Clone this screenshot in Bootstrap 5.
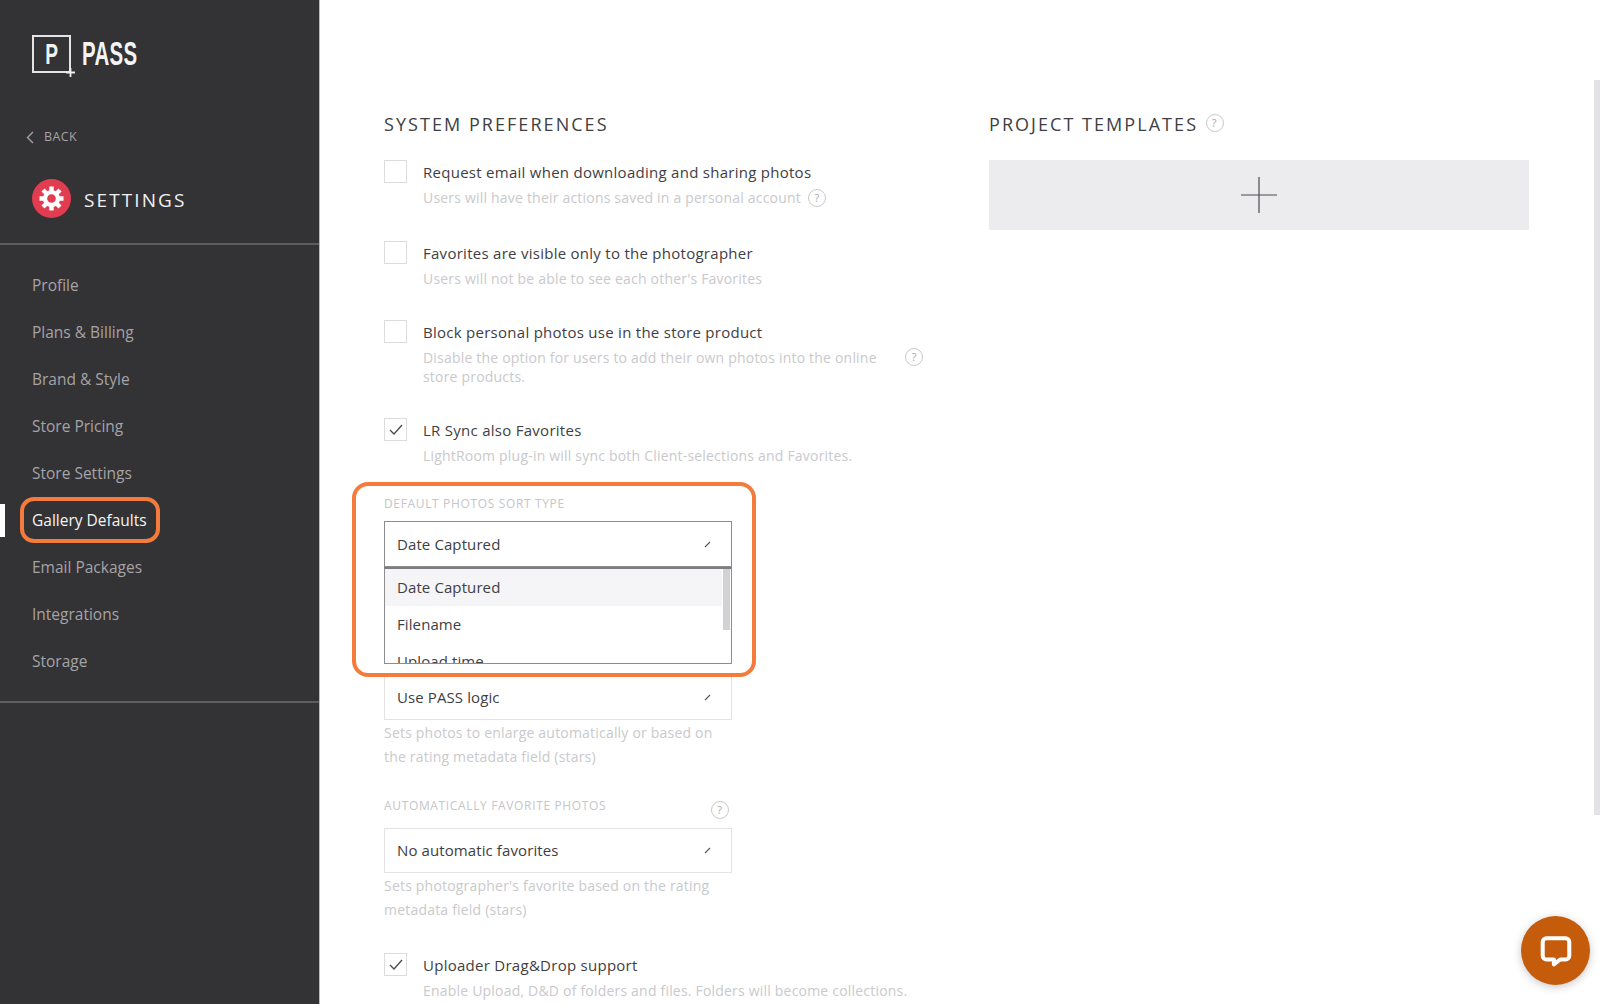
<!DOCTYPE html>
<html lang="en">
<head>
    <meta charset="UTF-8">
    <meta name="viewport" content="width=device-width, initial-scale=1.0">
    <title>PASS Settings</title>
    <link href="https://cdn.jsdelivr.net/npm/bootstrap@5.3.0/dist/css/bootstrap.min.css" rel="stylesheet">
    <style>
        html, body { height: 100%; overflow: hidden; }
        body { font-family: "Open Sans", "Liberation Sans", sans-serif; background: #fff; color: #404043; }

        /* sidebar */
        .side-panel { width: 320px; height: 1004px; background: #333235; border-right: 1px solid #b9b9bb; flex-shrink: 0; }
        .logo-row { padding: 35px 0 0 32px; height: 122px; }
        .logo-box { width: 39px; height: 38px; border: 2px solid #e4e4e4; position: relative; color: #f2f2f2; font: 700 29px/34px "Liberation Sans", sans-serif; display: flex; justify-content: center; }
        .logo-p { transform: scaleX(.66); display: block; }
        .logo-plus { position: absolute; right: -7px; bottom: -7px; width: 11px; height: 11px; }
        .logo-word { color: #f4f4f4; font: 700 33px/38px "Liberation Sans", sans-serif; margin-left: 11px; letter-spacing: .5px; transform: scaleX(.62); transform-origin: left center; }
        .back-row { padding-left: 26px; height: 30px; color: #a3a2a5; font-size: 12.5px; letter-spacing: .4px; }
        .back-row svg { margin-right: 10px; }
        .title-row { padding: 0 0 0 32px; height: 39px; margin-top: 27px; color: #f1f1f1; font-size: 19px; letter-spacing: 2.1px; }
        .title-row svg { margin-right: 13px; flex-shrink: 0; }
        .title-word { margin-top: 4px; }
        .side-rule { height: 2px; background: #5d5c5f; }
        .side-rule-top { margin-top: 25px; }
        .side-menu { padding: 17px 0 16px; }
        .side-menu .nav-link { height: 47px; padding: 0 0 0 32px; display: flex; align-items: center; color: #a5a4a7; font-size: 15.5px; position: relative; }
        .side-menu .nav-link.active { color: #f5f5f5; }
        .active-bar { position: absolute; left: 0; top: 7px; width: 5px; height: 33px; background: #fff; }
        .mark-menu { position: absolute; left: 20px; top: 0; width: 140px; height: 46px; border: 4px solid #f47b3b; border-radius: 14px; }

        /* main */
        .main-panel { padding: 112px 0 0 64px; }
        .col-prefs { width: 605px; flex-shrink: 0; }
        .col-templates { width: 540px; }
        .sect-title { font-size: 18px; line-height: 24px; letter-spacing: 2.05px; color: #404043; margin: 0; font-weight: 400; }
        .opt-list { margin-top: 24px; }
        .opt-row { display: flex; margin-bottom: 32px; position: relative; }
        .opt-row-wide { margin-bottom: 34px; }
        .opt-box { width: 23px; height: 23px; border: 1px solid #dcdbde; margin-right: 16px; flex-shrink: 0; display: flex; align-items: center; justify-content: center; }
        .opt-label { font-size: 15px; line-height: 24px; color: #3f3e42; letter-spacing: .27px; }
        .opt-desc { font-size: 14px; line-height: 19px; margin-top: 4px; color: #cac9cc; letter-spacing: .2px; }
        .field-head { font-size: 12px; line-height: 18px; color: #c6c5c8; letter-spacing: .65px; display: flex; justify-content: space-between; width: 348px; }
        .field-select { width: 348px; height: 45px; border: 1px solid #e3e2e5; display: flex; align-items: center; justify-content: space-between; padding: 0 20px 0 12px; font-size: 15px; color: #3f3e42; margin-top: 12px; background: #fff; letter-spacing: .1px; }
        .field-note { width: 348px; font-size: 14px; line-height: 23.5px; color: #cac9cc; margin-top: 1px; letter-spacing: .2px; }
        .sort-field { position: relative; margin-top: 30px; }
        .sort-field .field-select { height: 46px; margin-top: 8px; border-color: #8d8c8f; }
        .sort-list { position: absolute; left: 0; top: 72px; width: 348px; height: 97px; overflow: hidden; background: #fff; border: 1px solid #8d8c8f; border-top: 2px solid #7d7c80; z-index: 2; font-size: 15px; color: #3f3e42; letter-spacing: .1px; }
        .sort-item { height: 37px; padding: 0 12px; display: flex; align-items: center; }
        .sort-item.current { background: #f5f4f6; margin-right: 9px; }
        .sort-thumb { position: absolute; right: 1px; top: 0; width: 7px; height: 61px; background: #d2d1d4; }
        .mark-sort { position: absolute; left: -32px; top: -13px; width: 404px; height: 195px; border: 4px solid #f47b3b; border-radius: 16px; z-index: 3; }
        .enlarge-field { margin-top: 74px; }
        .auto-field { margin-top: 29px; }
        .auto-field .field-select { margin-top: 9px; }
        .hint-dot { width: 18px; height: 18px; border: 1.5px solid #c9c8cb; border-radius: 50%; color: #a9a8ab; font-size: 11px; line-height: 15px; text-align: center; display: inline-block; flex-shrink: 0; }
        .hint-low { margin-top: 4px; margin-right: 3px; }
        .hint-row { margin-left: 7px; vertical-align: 1px; }
        .hint-head { margin-left: 8px; margin-top: -3px; }
        .hint-side { position: absolute; left: 521px; top: 28px; }
        .tmpl-add { height: 70px; background: #ecebee; margin-top: 24px; display: flex; align-items: center; justify-content: center; }
        .scroll-thumb { position: absolute; right: 0; top: 80px; width: 6px; height: 735px; background: #e3e3e6; }
        .chat-btn { position: absolute; left: 1521px; top: 916px; width: 69px; height: 69px; border-radius: 50%; background: #c45c0b; box-shadow: 0 2px 8px rgba(0,0,0,.22); display: flex; align-items: center; justify-content: center; }
    </style>
</head>
<body>
<div class="d-flex position-relative">

    <!-- Sidebar -->
    <aside class="side-panel">
        <div class="logo-row d-flex align-items-start">
            <div class="logo-box"><span class="logo-p">P</span>
                <svg class="logo-plus" viewBox="0 0 11 11"><path d="M5.5 1v9M1 5.5h9" stroke="#eee" stroke-width="1.8"/></svg>
            </div>
            <div class="logo-word">PASS</div>
        </div>
        <div class="back-row d-flex align-items-center">
            <svg width="8" height="13" viewBox="0 0 8 13"><path d="M7 1 1.5 6.5 7 12" fill="none" stroke="#a3a2a5" stroke-width="1.4"/></svg>
            BACK
        </div>
        <div class="title-row d-flex align-items-center">
            <svg width="39" height="39" viewBox="0 0 39 39">
                <circle cx="19.5" cy="19.5" r="19.5" fill="#e23c50"/>
                <g stroke="#fff" stroke-width="4.4">
                    <path d="M19.5 7.5v24M7.5 19.5h24M11 11l17 17M28 11 11 28"/>
                </g>
                <circle cx="19.5" cy="19.5" r="8.6" fill="#fff"/>
                <circle cx="19.5" cy="19.5" r="4.3" fill="#e23c50"/>
            </svg>
            <span class="title-word">SETTINGS</span>
        </div>
        <div class="side-rule side-rule-top"></div>
        <nav class="nav flex-column side-menu">
            <a class="nav-link" href="#">Profile</a>
            <a class="nav-link" href="#">Plans &amp; Billing</a>
            <a class="nav-link" href="#">Brand &amp; Style</a>
            <a class="nav-link" href="#">Store Pricing</a>
            <a class="nav-link" href="#">Store Settings</a>
            <a class="nav-link active" href="#"><span class="active-bar"></span>Gallery Defaults<span class="mark-menu"></span></a>
            <a class="nav-link" href="#">Email Packages</a>
            <a class="nav-link" href="#">Integrations</a>
            <a class="nav-link" href="#">Storage</a>
        </nav>
        <div class="side-rule"></div>
    </aside>

    <!-- Main -->
    <main class="main-panel d-flex flex-grow-1">
        <section class="col-prefs">
            <h2 class="sect-title">SYSTEM PREFERENCES</h2>
            <div class="opt-list">
                <div class="opt-row opt-row-wide">
                    <span class="opt-box"></span>
                    <div>
                        <div class="opt-label">Request email when downloading and sharing photos</div>
                        <div class="opt-desc">Users will have their actions saved in a personal account<span class="hint-dot hint-row">?</span></div>
                    </div>
                </div>
                <div class="opt-row">
                    <span class="opt-box"></span>
                    <div>
                        <div class="opt-label">Favorites are visible only to the photographer</div>
                        <div class="opt-desc">Users will not be able to see each other's Favorites</div>
                    </div>
                </div>
                <div class="opt-row">
                    <span class="opt-box"></span>
                    <div>
                        <div class="opt-label">Block personal photos use in the store product</div>
                        <div class="opt-desc">Disable the option for users to add their own photos into the online<br>store products.</div>
                    </div>
                    <span class="hint-dot hint-side">?</span>
                </div>
                <div class="opt-row mb-0">
                    <span class="opt-box">
                        <svg width="14" height="12" viewBox="0 0 14 12"><path d="m1 6 4 4 8-9" fill="none" stroke="#4a494d" stroke-width="1.3"/></svg>
                    </span>
                    <div>
                        <div class="opt-label">LR Sync also Favorites</div>
                        <div class="opt-desc">LightRoom plug-in will sync both Client-selections and Favorites.</div>
                    </div>
                </div>
            </div>

            <div class="sort-field">
                <div class="field-head">DEFAULT PHOTOS SORT TYPE</div>
                <div class="field-select">Date Captured
                    <svg width="7" height="7" viewBox="0 0 7 7"><path d="m1 6 5-5" stroke="#555" stroke-width="1.1"/></svg>
                </div>
                <div class="sort-list">
                    <div class="sort-item current">Date Captured</div>
                    <div class="sort-item">Filename</div>
                    <div class="sort-item">Upload time</div>
                    <span class="sort-thumb"></span>
                </div>
                <span class="mark-sort"></span>
            </div>

            <div class="enlarge-field">
                <div class="field-head"><span></span><span class="hint-dot hint-low">?</span></div>
                <div class="field-select">Use PASS logic
                    <svg width="7" height="7" viewBox="0 0 7 7"><path d="m1 6 5-5" stroke="#555" stroke-width="1.1"/></svg>
                </div>
                <div class="field-note">Sets photos to enlarge automatically or based on the rating metadata field (stars)</div>
            </div>

            <div class="auto-field">
                <div class="field-head"><span>AUTOMATICALLY FAVORITE PHOTOS</span><span class="hint-dot hint-low">?</span></div>
                <div class="field-select">No automatic favorites
                    <svg width="7" height="7" viewBox="0 0 7 7"><path d="m1 6 5-5" stroke="#555" stroke-width="1.1"/></svg>
                </div>
                <div class="field-note">Sets photographer's favorite based on the rating metadata field (stars)</div>
            </div>

            <div class="opt-row mt-4 pt-2">
                <span class="opt-box">
                    <svg width="14" height="12" viewBox="0 0 14 12"><path d="m1 6 4 4 8-9" fill="none" stroke="#4a494d" stroke-width="1.3"/></svg>
                </span>
                <div>
                    <div class="opt-label">Uploader Drag&amp;Drop support</div>
                    <div class="opt-desc">Enable Upload, D&amp;D of folders and files. Folders will become collections.</div>
                </div>
            </div>
        </section>

        <section class="col-templates">
            <h2 class="sect-title d-flex align-items-center">PROJECT TEMPLATES<span class="hint-dot hint-head">?</span></h2>
            <div class="tmpl-add">
                <svg width="36" height="36" viewBox="0 0 36 36"><path d="M18 0v36M0 18h36" stroke="#4b4a4e" stroke-width="1.2"/></svg>
            </div>
        </section>
    </main>

    <span class="scroll-thumb"></span>
    <div class="chat-btn">
        <svg width="34" height="34" viewBox="0 0 32 32"><path d="M7 4h18a3.500 3.500 0 0 1 3.500 3.500v13a3.500 3.500 0 0 1-3.500 3.500h-5l-6 4.500v-4.500H7a3.500 3.500 0 0 1-3.500-3.500v-13A3.500 3.500 0 0 1 7 4Z" fill="none" stroke="#fff" stroke-width="3.8" stroke-linejoin="round"/></svg>
    </div>
</div>
<script src="https://cdn.jsdelivr.net/npm/bootstrap@5.3.0/dist/js/bootstrap.bundle.min.js"></script>
</body>
</html>
